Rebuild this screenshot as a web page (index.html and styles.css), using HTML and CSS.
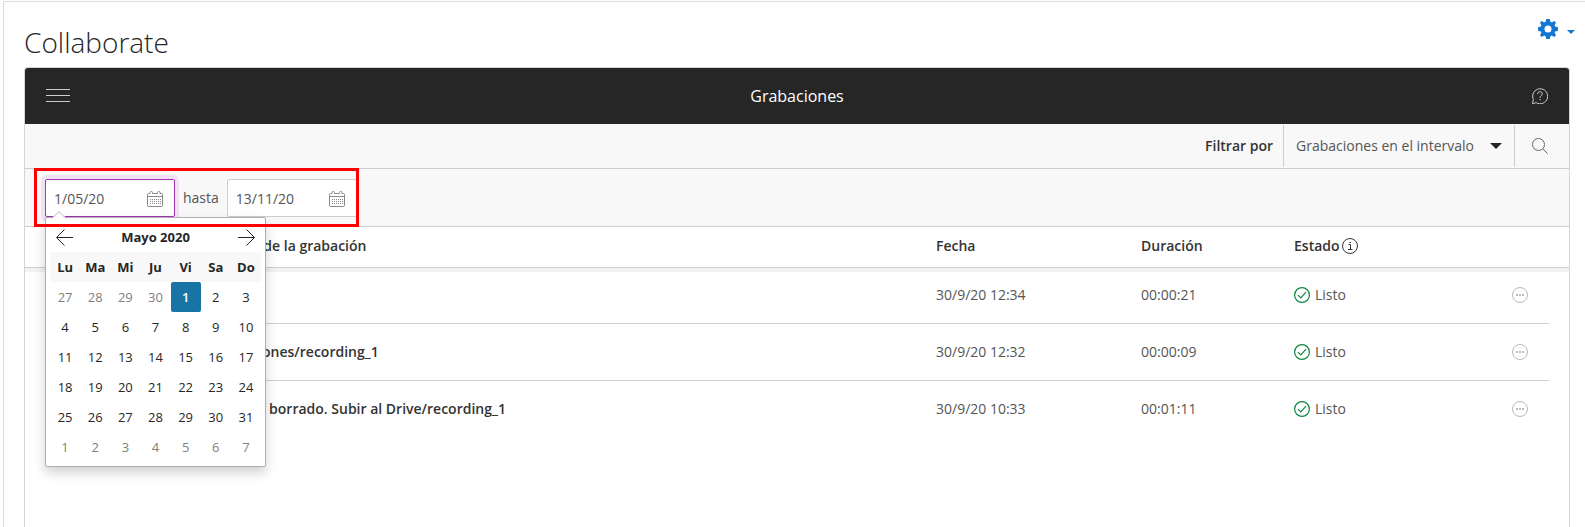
FILE: index.html
```html
<!DOCTYPE html>
<html lang="es">
<head>
    <meta charset="UTF-8">
    <meta name="viewport" content="width=device-width, initial-scale=1.0">
    <title>Collaborate</title>
    <link rel="stylesheet" href="styles.css">
</head>
<body>
    <!-- Iconos compartidos -->
    <svg class="sprite" aria-hidden="true">
        <symbol id="icon-calendar" viewBox="0 0 16 16">
            <path d="M3 2.500H1.500a1 1 0 0 0-1 1v11a1 1 0 0 0 1 1h13a1 1 0 0 0 1-1v-11a1 1 0 0 0-1-1H13M5.500 2.500h5M.5 5.500h15M3 2.500v-1a1.250 1 0 0 1 2.500 0v1M10.500 2.500v-1a1.250 1 0 0 1 2.500 0v1" fill="none" stroke="currentColor"/>
            <path d="M3 8.500h11M3 10.500h11M3 12.500h11" fill="none" stroke="currentColor" stroke-dasharray="1 1"/>
        </symbol>
        <symbol id="icon-check" viewBox="0 0 16 16">
            <circle cx="8" cy="8" r="7.400" fill="none" stroke="currentColor" stroke-width="1.200"/>
            <path d="M4 8.200l2.800 2.800L12 5.200" fill="none" stroke="currentColor" stroke-width="1.200"/>
        </symbol>
        <symbol id="icon-more" viewBox="0 0 16 16">
            <circle cx="8" cy="8" r="7.500" fill="none" stroke="currentColor"/>
            <path d="M4 7h2v2H4zM7 7h2v2H7zM10 7h2v2h-2z" fill="currentColor"/>
        </symbol>
    </svg>

    <div class="page">
        <div class="page-top">
            <h1 class="page-title">Collaborate</h1>
            <button class="settings" type="button" aria-label="Ajustes">
                <svg width="20" height="20" viewBox="0 0 20 20">
                    <path fill="currentColor" fill-rule="evenodd" d="M8.200 0h3.600l.6 2.800 1.400.6L16.300 2 18 3.700l-1.400 2.500.6 1.400 2.800.6v3.600l-2.800.6-.6 1.400L18 16.300 16.300 18l-2.500-1.400-1.400.6-.6 2.800H8.200l-.6-2.800-1.400-.6L3.700 18 2 16.300l1.400-2.500-.6-1.400L0 11.800V8.200l2.800-.6.6-1.400L2 3.700 3.700 2l2.500 1.400 1.400-.6zM10 6.500a3.500 3.500 0 1 0 0 7 3.500 3.500 0 0 0 0-7z"/>
                </svg>
                <span class="caret"></span>
            </button>
        </div>

        <main class="panel">
            <header class="panel-header">
                <button class="menu-btn" type="button" aria-label="Menú">
                    <span></span><span></span><span></span>
                </button>
                <h2 class="panel-title">Grabaciones</h2>
                <button class="help-btn" type="button" aria-label="Ayuda">
                    <svg width="16" height="16" viewBox="0 0 16 16" fill="none" stroke="currentColor">
                        <path d="M.5 15.500l.9-4A7.500 7.500 0 1 1 4 14.500c-1 .8-2 1-3.500 1z"/>
                        <path d="M5.700 6c0-1.400 1-2.300 2.300-2.300s2.300.9 2.300 2.100c0 1.700-2.200 1.800-2.200 3.700V10M8.100 11v1.300"/>
                    </svg>
                </button>
            </header>

            <div class="filter-bar">
                <label class="filter-label" for="filter">Filtrar por</label>
                <div class="select-wrap">
                    <select id="filter" class="filter-select">
                        <option>Grabaciones en el intervalo</option>
                    </select>
                </div>
                <button class="search-btn" type="button" aria-label="Buscar">
                    <svg width="16" height="16" viewBox="0 0 16 16" fill="none" stroke="currentColor">
                        <circle cx="6.500" cy="6.500" r="6"/>
                        <path d="M11 11l4.600 4.600"/>
                    </svg>
                </button>
            </div>

            <div class="date-bar">
                <div class="date-field">
                    <input class="date-input active" type="text" value="1/05/20" aria-label="Desde">
                    <svg class="date-icon" width="16" height="16"><use href="#icon-calendar"/></svg>

                    <!-- Calendario desplegable -->
                    <div class="calendar">
                        <div class="calendar-header">
                            <button class="calendar-nav" type="button" aria-label="Mes anterior">
                                <svg width="17" height="17" viewBox="0 0 17 17" fill="none" stroke="currentColor"><path d="M17 8.500H1M8.500.5l-8 8 8 8"/></svg>
                            </button>
                            <strong>Mayo 2020</strong>
                            <button class="calendar-nav" type="button" aria-label="Mes siguiente">
                                <svg width="17" height="17" viewBox="0 0 17 17" fill="none" stroke="currentColor"><path d="M0 8.500h16M8.500.5l8 8-8 8"/></svg>
                            </button>
                        </div>
                        <table class="calendar-days">
                            <thead>
                                <tr><th>Lu</th><th>Ma</th><th>Mi</th><th>Ju</th><th>Vi</th><th>Sa</th><th>Do</th></tr>
                            </thead>
                            <tbody>
                                <tr><td class="muted">27</td><td class="muted">28</td><td class="muted">29</td><td class="muted">30</td><td class="selected">1</td><td>2</td><td>3</td></tr>
                                <tr><td>4</td><td>5</td><td>6</td><td>7</td><td>8</td><td>9</td><td>10</td></tr>
                                <tr><td>11</td><td>12</td><td>13</td><td>14</td><td>15</td><td>16</td><td>17</td></tr>
                                <tr><td>18</td><td>19</td><td>20</td><td>21</td><td>22</td><td>23</td><td>24</td></tr>
                                <tr><td>25</td><td>26</td><td>27</td><td>28</td><td>29</td><td>30</td><td>31</td></tr>
                                <tr><td class="muted">1</td><td class="muted">2</td><td class="muted">3</td><td class="muted">4</td><td class="muted">5</td><td class="muted">6</td><td class="muted">7</td></tr>
                            </tbody>
                        </table>
                    </div>
                </div>
                <label for="date-to">hasta</label>
                <div class="date-field">
                    <input id="date-to" class="date-input" type="text" value="13/11/20">
                    <svg class="date-icon" width="16" height="16"><use href="#icon-calendar"/></svg>
                </div>
                <div class="highlight"></div>
            </div>

            <table class="recordings">
                <thead>
                    <tr>
                        <th class="col-name">Nombre de la grabación</th>
                        <th class="col-date">Fecha</th>
                        <th class="col-length">Duración</th>
                        <th class="col-status">
                            <span class="status">Estado<svg width="16" height="16" viewBox="0 0 16 16" fill="none" stroke="currentColor"><circle cx="8" cy="8" r="7.500"/><path d="M6.500 6.500h2v5M6 11.500h4.500M7.500 4.500h1.500"/></svg></span>
                        </th>
                        <th class="col-menu"></th>
                    </tr>
                </thead>
                <tbody>
                    <tr>
                        <td class="col-name"></td>
                        <td>30/9/20 12:34</td>
                        <td>00:00:21</td>
                        <td><span class="status ready"><svg width="16" height="16"><use href="#icon-check"/></svg>Listo</span></td>
                        <td><button class="more-btn" type="button" aria-label="Opciones"><svg width="16" height="16"><use href="#icon-more"/></svg></button></td>
                    </tr>
                    <tr>
                        <td class="col-name">Grabaciones/recording_1</td>
                        <td>30/9/20 12:32</td>
                        <td>00:00:09</td>
                        <td><span class="status ready"><svg width="16" height="16"><use href="#icon-check"/></svg>Listo</span></td>
                        <td><button class="more-btn" type="button" aria-label="Opciones"><svg width="16" height="16"><use href="#icon-more"/></svg></button></td>
                    </tr>
                    <tr>
                        <td class="col-name">Para ser borrado. Subir al Drive/recording_1</td>
                        <td>30/9/20 10:33</td>
                        <td>00:01:11</td>
                        <td><span class="status ready"><svg width="16" height="16"><use href="#icon-check"/></svg>Listo</span></td>
                        <td><button class="more-btn" type="button" aria-label="Opciones"><svg width="16" height="16"><use href="#icon-more"/></svg></button></td>
                    </tr>
                </tbody>
            </table>
        </main>
    </div>
</body>
</html>
```

FILE: styles.css
```css
* {
    box-sizing: border-box;
}

body {
    margin: 0;
    padding: 1px 0 0 3px;
    font-family: "Open Sans", "Noto Sans", sans-serif;
    font-size: 14px;
    line-height: 20px;
    color: #262626;
    background: #fff;
}

button {
    padding: 0;
    border: none;
    background: none;
    color: inherit;
    font: inherit;
    cursor: pointer;
}

svg {
    display: block;
    flex: none;
}

.sprite {
    position: absolute;
    width: 0;
    height: 0;
}

.page {
    display: flex;
    flex-direction: column;
    min-height: calc(100vh - 1px);
    padding: 0 15px 0 20px;
    border-top: 1px solid #dcdcdc;
    border-left: 1px solid #dcdcdc;
}

/* Cabecera de la página */
.page-top {
    display: flex;
    justify-content: space-between;
    align-items: flex-start;
    height: 65px;
}

.page-title {
    margin: 20px 0 0;
    font-size: 28px;
    font-weight: 300;
    line-height: 40px;
}

.settings {
    display: flex;
    align-items: center;
    gap: 9px;
    margin: 17px -5px 0 0;
    color: #1477d4;
}

.caret {
    margin-top: 5px;
    border: 4px solid transparent;
    border-top-color: currentColor;
    border-bottom: 0;
}

/* Panel principal */
.panel {
    flex: 1;
    border: 1px solid #d5d5d5;
    border-bottom: 0;
    border-radius: 4px 4px 0 0;
}

.panel-header {
    display: grid;
    grid-template-columns: 1fr auto 1fr;
    align-items: center;
    height: 56px;
    padding: 0 21px;
    border-radius: 3px 3px 0 0;
    background: #262626;
    color: #fff;
}

.panel-title {
    margin: 0;
    font-size: 16px;
    font-weight: 500;
}

.menu-btn {
    display: flex;
    flex-direction: column;
    gap: 5px;
    width: 24px;
    padding-bottom: 1px;
}

.menu-btn span {
    height: 1px;
    background: #cdcdcd;
}

.help-btn {
    justify-self: end;
    color: #cdcdcd;
}

/* Filtro */
.filter-bar {
    display: flex;
    justify-content: flex-end;
    align-items: center;
    height: 45px;
    border-bottom: 1px solid #cdcdcd;
    background: #f8f8f8;
}

.filter-label {
    margin-right: 10px;
    color: #333;
    font-weight: 600;
}

.select-wrap {
    position: relative;
    width: 232px;
    border: solid #cdcdcd;
    border-width: 0 1px;
}

.select-wrap::after {
    content: "";
    position: absolute;
    top: 18px;
    right: 12px;
    border: 6px solid transparent;
    border-top-color: #262626;
    border-bottom: 0;
    pointer-events: none;
}

.filter-select {
    display: block;
    width: 100%;
    height: 42px;
    padding: 0 12px;
    border: none;
    background: none;
    color: #555;
    font: inherit;
    appearance: none;
}

.search-btn {
    display: flex;
    justify-content: center;
    width: 54px;
    padding-right: 4px;
    color: #666;
}

/* Intervalo de fechas */
.date-bar {
    position: relative;
    display: flex;
    align-items: center;
    gap: 8px;
    height: 58px;
    padding: 0 20px;
    border-bottom: 1px solid #cdcdcd;
    background: #f8f8f8;
    color: #555;
}

.date-field {
    position: relative;
}

.date-input {
    display: block;
    width: 130px;
    height: 38px;
    padding: 2px 36px 0 8px;
    border: 1px solid #cdcdcd;
    border-radius: 2px;
    background: #fff;
    color: #555;
    font: inherit;
}

.date-input.active {
    border-color: #a234b5;
    box-shadow: 0 0 0 4px #efe3f1;
}

.date-icon {
    position: absolute;
    top: 12px;
    right: 12px;
    color: #888;
}

/* Marco rojo sobre el intervalo */
.highlight {
    position: absolute;
    top: -1px;
    left: 9px;
    z-index: 20;
    width: 325px;
    height: 59px;
    border: 3px solid #f00;
    pointer-events: none;
}

/* Calendario */
.calendar {
    position: absolute;
    top: 38px;
    left: 0;
    z-index: 10;
    width: 221px;
    padding: 0 4px 4px;
    border: 1px solid #aeaeae;
    border-radius: 2px;
    background: #fff;
    box-shadow: 0 6px 12px rgba(0, 0, 0, 0.18);
    color: #262626;
    font-size: 13px;
}

.calendar::before {
    content: "";
    position: absolute;
    top: -5px;
    left: 8px;
    width: 9px;
    height: 9px;
    border: solid #cdcdcd;
    border-width: 1px 0 0 1px;
    background: #fff;
    transform: rotate(45deg);
}

.calendar-header {
    position: relative;
    display: flex;
    justify-content: space-between;
    align-items: center;
    height: 34px;
    padding: 5px 6px 0;
}

.calendar-days {
    width: 100%;
    table-layout: fixed;
    border-collapse: collapse;
}

.calendar-days th,
.calendar-days td {
    height: 30px;
    padding: 0;
    text-align: center;
}

.calendar-days th {
    background: #f8f8f8;
    font-weight: 700;
}

.calendar-days .muted {
    color: #808080;
}

.calendar-days .selected {
    border-radius: 2px;
    background: #1874a4;
    color: #fff;
    font-weight: 600;
}

/* Tabla de grabaciones */
.recordings {
    width: 100%;
    table-layout: fixed;
    border-collapse: separate;
    border-spacing: 0;
}

.recordings th,
.recordings td {
    padding: 0 0 2px;
    text-align: left;
}

.recordings thead tr {
    box-shadow: 0 4px 0 #f2f2f2;
}

.recordings th {
    height: 41px;
    border-bottom: 1px solid #cdcdcd;
    color: #333;
    font-weight: 600;
}

.recordings td {
    height: 57px;
    color: #555;
}

.recordings tbody tr:first-child td {
    height: 56px;
}

.recordings tbody tr:not(:last-child) {
    background: linear-gradient(#cdcdcd, #cdcdcd) center bottom / calc(100% - 40px) 1px no-repeat;
}

.recordings th.col-name {
    padding-left: 179px;
}

.recordings td.col-name {
    padding-left: 185px;
    color: #333;
    font-weight: 600;
}

.col-date {
    width: 205px;
}

.col-length {
    width: 153px;
}

.col-status {
    width: 218px;
}

.col-menu {
    width: 57px;
}

.status {
    display: flex;
    align-items: center;
    gap: 2px;
}

.ready {
    gap: 5px;
}

.ready svg {
    color: #0c8a3c;
}

.more-btn {
    display: block;
    color: #bbb;
}
```
